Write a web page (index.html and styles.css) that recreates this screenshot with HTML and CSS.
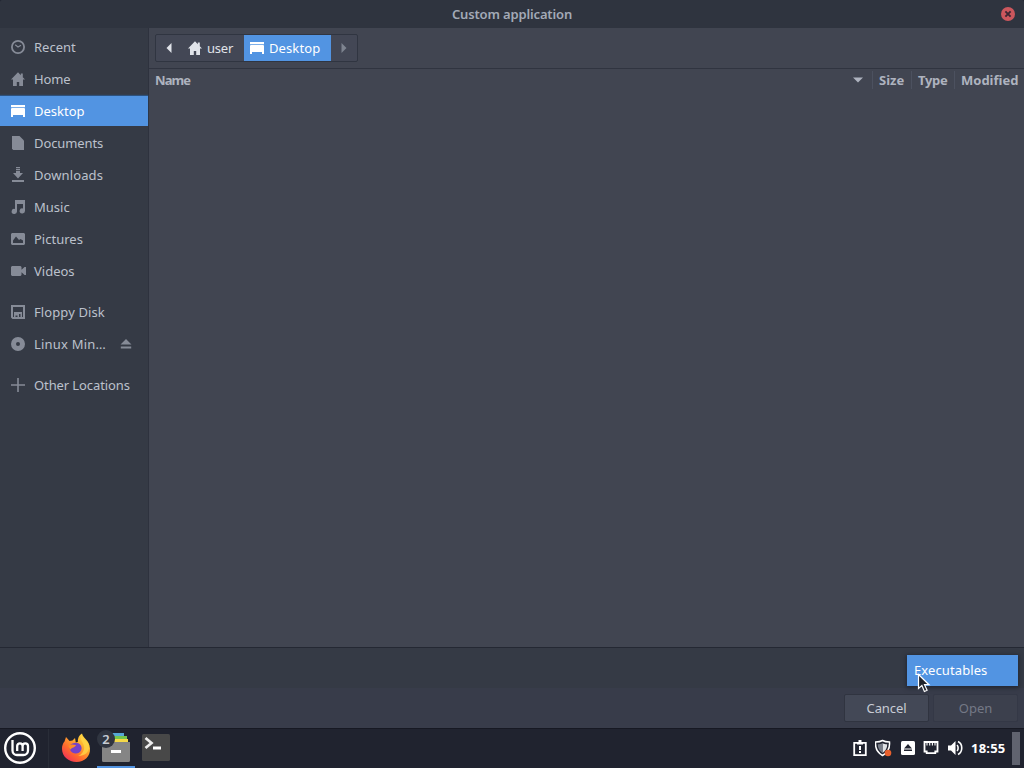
FILE: index.html
```html
<!DOCTYPE html>
<html lang="en">
<head>
<meta charset="utf-8">
<title>Custom application</title>
<link rel="stylesheet" href="styles.css">
</head>
<body>
<div class="screen">
  <header class="titlebar">
    <span class="title">Custom application</span>
    <svg class="close" width="14" height="14" viewBox="0 0 14 14"><circle cx="7" cy="7" r="7" fill="#cc575d"/><path d="M4.4 4.4l5.2 5.2M9.6 4.4L4.4 9.6" stroke="#3b2733" stroke-width="1.9"/></svg>
  </header>
  <div class="content">
    <nav class="sidebar">
      <div class="place"><svg class="icon" viewBox="0 0 16 16"><circle cx="8" cy="8" r="6.1" fill="none" stroke="currentColor" stroke-width="1.8"/><path d="M5.2 5.8L8 8l3-1.8" fill="none" stroke="currentColor" stroke-width="1.2"/></svg><span class="t-recent">Recent</span></div>
      <div class="place"><svg class="icon" viewBox="0 0 16 16"><path d="M8 1.2L1 8.6h2V15h3.800v-4h2.400v4H13V8.600h2L12.800 6.200V2.500h-2v1.700z" fill="currentColor"/></svg><span class="t-home">Home</span></div>
      <div class="place selected"><svg class="icon" viewBox="0 0 16 16"><path d="M1 2h14v2.300H1zM1.500 5h13l.5 1v8h-2v-2H3v2H1V6z" fill="currentColor"/></svg><span class="t-desktop">Desktop</span></div>
      <div class="place"><svg class="icon" viewBox="0 0 16 16"><path d="M2 1h7.500L14 5.500V15H3.200L2 13.800z" fill="currentColor"/></svg><span class="t-documents">Documents</span></div>
      <div class="place"><svg class="icon" viewBox="0 0 16 16"><path d="M6 0h4v1.300H6zM6 2h4v1.300H6zM6 4h4v2h3l-5 5.400L3 6h3zM2 13h12v2H2z" fill="currentColor"/></svg><span class="t-downloads">Downloads</span></div>
      <div class="place"><svg class="icon" viewBox="0 0 16 16"><path d="M5 1h10v11a2.700 2.500 0 1 1-2-2.500V5H7v7.500A2.700 2.500 0 1 1 5 10zM7 3.500h6V5H7z" fill="currentColor"/></svg><span class="t-music">Music</span></div>
      <div class="place"><svg class="icon" viewBox="0 0 16 16"><path fill-rule="evenodd" d="M2 2h12l1 1v10l-1 1H2l-1-1V3zM3 12h10V9.500l-2.500-1.500L9 9 6 5.500 3 9.500z" fill="currentColor"/></svg><span class="t-pictures">Pictures</span></div>
      <div class="place"><svg class="icon" viewBox="0 0 16 16"><path d="M2 3h8.500l1 1v2.800L14.500 4H16v8h-1.500l-3-2.800V12l-1 1H2l-1-1V4z" fill="currentColor"/></svg><span class="t-videos">Videos</span></div>
      <div class="place group"><svg class="icon" viewBox="0 0 16 16"><path fill-rule="evenodd" d="M1 1h14v14H2.500L1 13.500zM3 3v10h10V3zM4 8h8v5h-1.500v-3H9v3H7.500v-1.500H5.500V13H4z" fill="currentColor"/></svg><span class="t-floppy">Floppy Disk</span></div>
      <div class="place"><svg class="icon" viewBox="0 0 16 16"><path fill-rule="evenodd" d="M8 1a7 7 0 1 0 0 14A7 7 0 1 0 8 1zM8 6a2 2 0 1 1 0 4 2 2 0 1 1 0-4z" fill="currentColor"/></svg><span class="t-linux">Linux Min…</span><svg class="eject" width="12" height="12" viewBox="0 0 12 12"><path d="M6 1l5.500 5.500H.5zM.8 8.500h10.400v2H.8z" fill="currentColor"/></svg></div>
      <div class="place group"><svg class="icon" viewBox="0 0 16 16"><path d="M7.200 1h1.600v6.200H15v1.600H8.800V15H7.200V8.800H1V7.200h6.200z" fill="currentColor"/></svg><span class="t-other">Other Locations</span></div>
    </nav>
    <main class="files">
      <div class="pathbar">
        <div class="crumbs">
          <div class="crumb arrow"><svg width="6" height="10" viewBox="0 0 6 10"><path d="M5.500 0v10L.5 5z" fill="currentColor"/></svg></div>
          <div class="crumb user"><svg class="icon" viewBox="0 0 16 16"><path d="M8 1.200L1 8.600h2V15h3.800v-4h2.400v4H13V8.600h2L12.800 6.200V2.500h-2v1.700z" fill="currentColor"/></svg><span class="t-user">user</span></div>
          <div class="crumb current"><svg class="icon" viewBox="0 0 16 16"><path d="M1 2h14v2.300H1zM1.500 5h13l.5 1v8h-2v-2H3v2H1V6z" fill="currentColor"/></svg><span class="t-desktop">Desktop</span></div>
          <div class="crumb arrow next"><svg width="6" height="10" viewBox="0 0 6 10"><path d="M.5 0v10l5-5z" fill="currentColor"/></svg></div>
        </div>
      </div>
      <div class="columns">
        <div class="col name"><span class="t-name">Name</span><svg width="10" height="6" viewBox="0 0 10 6"><path d="M0 .5h10l-5 5z" fill="currentColor"/></svg></div>
        <div class="col size"><span class="t-size">Size</span></div>
        <div class="col type"><span class="t-type">Type</span></div>
        <div class="col modified"><span class="t-modified">Modified</span></div>
      </div>
    </main>
  </div>
  <footer class="actions">
    <div class="filter-row"><div class="filter"><span class="t-exec">Executables</span></div></div>
    <div class="buttons">
      <button class="button"><span class="t-cancel">Cancel</span></button>
      <button class="button" disabled><span class="t-open">Open</span></button>
    </div>
    <svg class="pointer" width="14" height="20" viewBox="0 0 14 20"><path d="M1.500 1.500v14l3.400-3 2.500 6 2.700-1.200-2.600-5.600H12z" fill="#20232b" stroke="#fff" stroke-width="1.200"/></svg>
  </footer>
  <div class="panel">
    <div class="launcher">
      <svg width="32" height="32" viewBox="0 0 32 32"><circle cx="16" cy="16" r="14.800" fill="#20232f" stroke="#fff" stroke-width="2.400"/><path d="M8.500 8v10.500A4.500 4.500 0 0 0 13 23h6.500a4.500 4.500 0 0 0 4.500-4.500V14a2.700 2.700 0 0 0-5.400 0v5M18.600 14a2.700 2.700 0 0 0-5.400 0v5" fill="none" stroke="#fff" stroke-width="2.300"/></svg>
    </div>
    <div class="task">
      <svg width="30" height="32" viewBox="0 0 30 32">
        <defs><linearGradient id="flame" x1="1" y1="0" x2=".2" y2="1"><stop offset="0" stop-color="#fff14f"/><stop offset=".4" stop-color="#ffad2d"/><stop offset=".7" stop-color="#ff692d"/><stop offset="1" stop-color="#f02d5c"/></linearGradient></defs>
        <path d="M5 5l3.500 4 3-.5L14 6l.8 4.500 2-.5C16.500 6.500 18 3 21 1.500c1 5 7.500 6.500 8 15C29.400 24.500 23.500 30 15.500 30S1.200 24.500 1 17c-.1-3 .8-5.500 2.500-7.500z" fill="url(#flame)"/>
        <path d="M9 13.500c2-3 8-4 10.500-.5 3 4-.5 9-5 8.500-4 0-7-4-5.500-8z" fill="#7542c9"/>
        <path d="M7.500 14c3-2.500 4.500-1.500 7.500-1-1 3-4 2-5 4-.5 1-1 1-2.500-3z" fill="#ff8b26"/>
        <path d="M20.500 3c-2 5 1.500 7 2.500 11 1 5-3 9-6 10 7 0 11-4 11-9 0-6-6-7-7.500-12z" fill="#ffd447" opacity=".8"/>
      </svg>
    </div>
    <div class="task active">
      <svg width="28" height="30" viewBox="0 0 28 30"><path d="M7 0h15v7H7z" fill="#56a7d4"/><path d="M9 3h16v5H9z" fill="#74c64c"/><path d="M11 6h15v5H11z" fill="#f4d849"/><path d="M0 9h28v18.500a1.500 1.500 0 0 1-1.500 1.500h-25A1.500 1.500 0 0 1 0 27.500z" fill="#858585"/><path d="M9 17h10v3H9z" fill="#fff"/></svg>
      <span class="badge">2</span>
    </div>
    <div class="task">
      <svg width="28" height="28" viewBox="0 0 28 28"><rect width="28" height="27" rx="1.500" fill="#484848"/><path d="M3.500 4l6 5-6 5" fill="none" stroke="#ededed" stroke-width="2.700"/><path d="M11 12.500h8v3h-8z" fill="#fff"/></svg>
    </div>
    <div class="tray">
      <svg width="16" height="18" viewBox="0 0 16 18"><path d="M2.200 3.800h11.600v12.400H2.200z" fill="none" stroke="#fff" stroke-width="1.800"/><path d="M5 3h1.500V1h3v2H11v2.500H5zM7 7h2v4H7zM7 12h2v2H7z" fill="#fff"/></svg>
      <svg width="17" height="18" viewBox="0 0 17 18"><path d="M7.500 1.500c2 1.200 4.500 1.500 7 1.500.5 6-1.500 10.500-7 13.500C2 13.500 0 9 .6 3c2.400 0 4.900-.3 6.900-1.500z" fill="#20232f" stroke="#fff" stroke-width="1.500"/><path d="M7.500 4.300c1.500.8 3 1 4.700 1 0 4-1.500 6.700-4.700 8.700z" fill="#e0e2e5"/><path d="M7.500 4.300c-1.500.8-3 1-4.700 1 0 4 1.500 6.700 4.700 8.700z" fill="#777d88"/><circle cx="13" cy="14" r="3.300" fill="#e9612e"/></svg>
      <svg width="16" height="18" viewBox="0 0 16 18"><rect x="1" y="2" width="14" height="14" rx="1.500" fill="#fff"/><path d="M8 5l4 4.500H4zM4 10.500h8V12H4z" fill="#20232f"/></svg>
      <svg width="16" height="18" viewBox="0 0 16 18"><path d="M1.500 3h13v9.500h-2.200v1.700H3.700v-1.700H1.500z" fill="none" stroke="#fff" stroke-width="1.800"/><path d="M4 4v2.500M6.700 4v2.500M9.400 4v2.500M12 4v2.500" stroke="#fff" stroke-width="1.100"/></svg>
      <svg width="17" height="18" viewBox="0 0 17 18"><path d="M1 6.500h3L8.500 2v14L4 11.500H1z" fill="#fff"/><path d="M10 6c1.500 1.200 1.500 4.800 0 6M11 2.500c5 2.500 5 10.500 0 13" fill="none" stroke="#fff" stroke-width="1.600"/></svg>
    </div>
    <span class="clock">18:55</span>
    <div class="desktop-corner"></div>
  </div>
</div>
</body>
</html>
```
FILE: styles.css
```css
* { box-sizing: border-box; }
body {
  margin: 0;
  background: #20232f;
  color: #bcc1cc;
  font: 13px/20px "Noto Sans", sans-serif;
}
.screen { width: 1024px; height: 768px; display: flex; flex-direction: column; overflow: hidden; }
span { white-space: nowrap; }
svg { flex: none; display: block; }
.icon { width: 16px; height: 16px; }

.titlebar { flex: none; height: 28px; background: #2f343f; display: grid; grid-template-columns: 1fr auto 1fr; align-items: center; padding: 0 9px; border-radius: 2px 2px 0 0; }
.title { grid-column: 2; font-weight: 600; color: #a3aab7; letter-spacing: -0.15px; }
.close { justify-self: end; }
.content { flex: 1; min-height: 0; display: flex; }
.sidebar { width: 149px; padding-top: 3px; background: #353a45; border-right: 1px solid #2e323e; }
.place { height: 32px; padding-left: 10px; display: flex; align-items: center; gap: 8px; }
.place > .icon { color: #868b97; }
.place.group { margin-top: 9px; }
.place.selected { height: 30px; margin: 1px 0; background: #5294e2; color: #fff; box-shadow: 0 -1px 1px #2e527e; }
.place.selected > .icon { color: #fff; }
.eject { color: #868b97; margin-left: 6px; }
.t-documents, .t-home, .t-other { letter-spacing: -0.1px; }
.t-downloads, .t-floppy { letter-spacing: 0.1px; }
.t-linux { letter-spacing: 0.2px; }

.files { flex: 1; background: #414551; }
.pathbar { height: 41px; padding: 6px 6px 0; border-bottom: 1px solid #303440; }
.crumbs { display: flex; width: 203px; height: 28px; border: 1px solid #303541; border-radius: 2px; background: #434755; color: #e0e3e9; }
.crumb { display: flex; align-items: center; gap: 4px; }
.arrow { width: 25px; justify-content: center; }
.user { width: 63px; padding-left: 6px; }
.user span { letter-spacing: -0.2px; }
.current { width: 87px; padding-left: 5px; background: #5294e2; color: #fff; }
.current span { letter-spacing: 0.1px; }
.next { width: 26px; color: #7e8490; }
.columns { height: 22px; display: flex; align-items: center; font-weight: 700; color: #aeb3bf; }
.col { height: 18px; display: flex; align-items: center; border-left: 1px solid #4c515f; padding-left: 6px; }
.name { width: 723px; border: 0; justify-content: space-between; padding-right: 9px; }
.t-name { letter-spacing: -0.9px; }
.size { width: 39px; }
.type { width: 43px; }
.t-type { letter-spacing: -0.3px; }
.modified { flex: 1; }

.actions { flex: none; position: relative; height: 81px; border-top: 1px solid #242833; background: #353a45; }
.filter-row { height: 40px; padding: 7px 6px 0; display: flex; justify-content: flex-end; }
.filter { width: 111px; height: 31px; padding: 5px 7px; background: #5294e2; color: #fff; box-shadow: 0 1px 4px 1px #222733; }
.t-exec { letter-spacing: 0.1px; }
.buttons { height: 40px; background: #383c4a; display: flex; justify-content: flex-end; gap: 4px; padding: 6px 6px 0; }
.button { width: 85px; height: 28px; padding: 0; border: 1px solid #303440; border-radius: 2px; background: #434856; color: #c8ccd5; font: inherit; }
.button:disabled { background: #3c404d; border-color: #343846; color: #747986; }
.t-cancel { letter-spacing: -0.1px; }
.pointer { position: absolute; left: 917px; top: 25px; }

.panel { flex: none; height: 40px; background: #20232f; border-top: 1px solid #171923; display: flex; }
.launcher { width: 49px; padding: 3px 0 0 4px; border-right: 1px solid #292d38; }
.task { position: relative; width: 40px; display: flex; justify-content: center; padding-top: 5px; }
.launcher + .task { margin-left: 7px; padding-top: 3px; }
.task.active { width: 38px; margin: 0 1px; padding-top: 4px; border-bottom: 2px solid #5294e2; }
.badge { position: absolute; left: 0; top: 1px; width: 18px; height: 18px; border-radius: 50%; background: #303540; color: #c7cbd2; font-weight: 600; line-height: 18px; text-align: center; }
.tray { margin-left: auto; display: flex; gap: 8px; padding-top: 10px; }
.tray svg:nth-child(2) { margin: 0 0 0 -1px; }
.tray svg:nth-child(4) { margin-left: -1px; }
.clock { font-weight: 700; color: #fff; line-height: 38px; margin-left: 7px; width: 35px; letter-spacing: 0.2px; }
.desktop-corner { width: 8px; height: 33px; margin: 3px 4px 0 6px; background: #60636f; }
```
